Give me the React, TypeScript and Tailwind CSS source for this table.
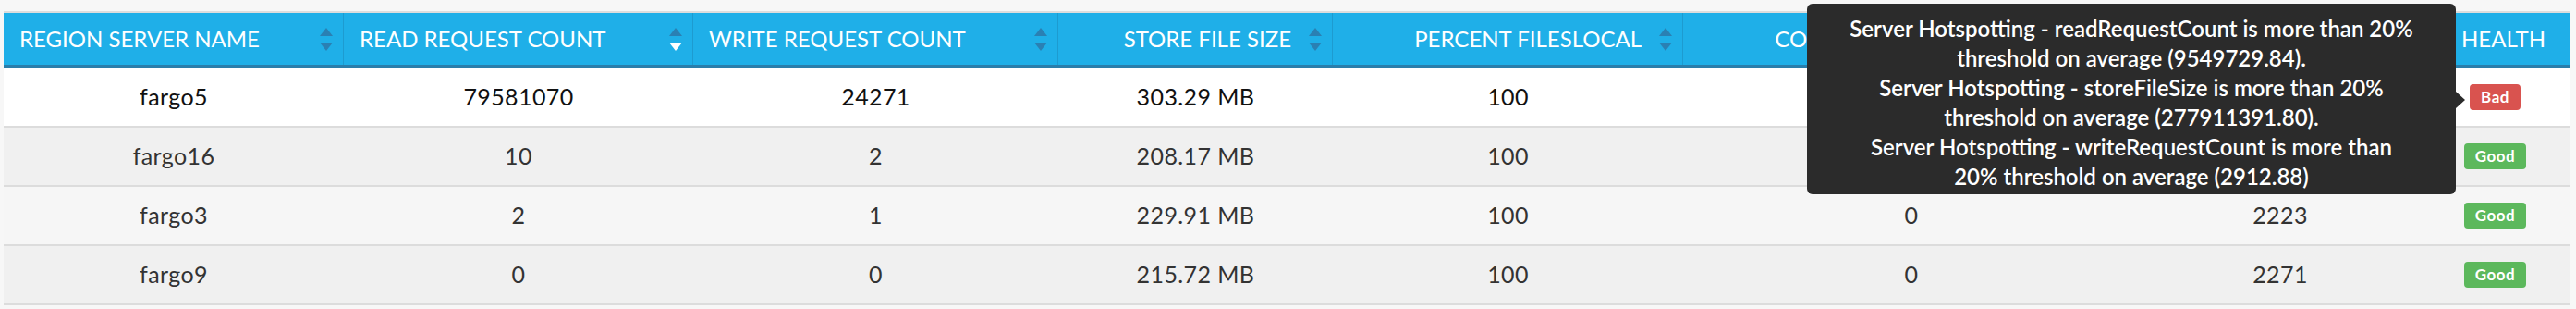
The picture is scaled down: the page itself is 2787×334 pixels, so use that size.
import React from "react"

type Col = { label: string; width: number; align: "left" | "right"; sort: "none" | "idle" | "desc" }

const columns: Col[] = [
  { label: "REGION SERVER NAME", width: 368, align: "left", sort: "idle" },
  { label: "READ REQUEST COUNT", width: 378, align: "left", sort: "desc" },
  { label: "WRITE REQUEST COUNT", width: 395, align: "left", sort: "idle" },
  { label: "STORE FILE SIZE", width: 297, align: "right", sort: "idle" },
  { label: "PERCENT FILESLOCAL", width: 379, align: "right", sort: "idle" },
  { label: "COMPACTION QUEUE LENGTH", width: 494, align: "right", sort: "idle" },
  { label: "REGION COUNT", width: 304, align: "right", sort: "idle" },
  { label: "HEALTH", width: 161, align: "right", sort: "none" },
]

const rows = [
  { name: "fargo5", read: "79581070", write: "24271", size: "303.29 MB", local: "100", queue: "0", regions: "2196", health: "Bad" },
  { name: "fargo16", read: "10", write: "2", size: "208.17 MB", local: "100", queue: "0", regions: "2198", health: "Good" },
  { name: "fargo3", read: "2", write: "1", size: "229.91 MB", local: "100", queue: "0", regions: "2223", health: "Good" },
  { name: "fargo9", read: "0", write: "0", size: "215.72 MB", local: "100", queue: "0", regions: "2271", health: "Good" },
]

const rowBg = ["bg-white", "bg-[#f0f0f0]", "bg-[#f6f6f6]", "bg-[#f0f0f0]"]

function SortIcon({ state }: { state: "idle" | "desc" }) {
  return (
    <svg width="14" height="25" viewBox="0 0 14 25" className="absolute right-[11px] top-[16px]">
      <polygon points="0,9 7,0 14,9" fill="#2a80b3" />
      <polygon points="0,16 14,16 7,25" fill={state === "desc" ? "#ffffff" : "#2a80b3"} />
    </svg>
  )
}

export default function App() {
  return (
    <div className="relative w-[2787px] h-[334px] bg-[#f7f7f7] pt-[12px] pl-[4px] overflow-hidden" style={{ fontFamily: "Lato, 'Open Sans', sans-serif" }}>
      <div className="w-[2776px] border-t-2 border-[#dddddd]">
        {/* Header */}
        <div className="flex h-[60px] bg-[#1fafe8] border-b-4 border-[#2a7eab]">
          {columns.map((c, i) => (
            <div
              key={c.label}
              style={{ width: c.width }}
              className={`relative flex items-center h-full text-white text-[24px] ${i < columns.length - 1 ? "border-r border-[#1d9bd0]" : ""} ${c.align === "left" ? "justify-start pl-[17px]" : c.sort === "none" ? "justify-end pr-[26px]" : "justify-end pr-[44px]"}`}
            >
              <span className="whitespace-nowrap">{c.label}</span>
              {c.sort !== "none" && <SortIcon state={c.sort} />}
            </div>
          ))}
        </div>

        {/* Rows */}
        {rows.map((r, i) => {
          const cells = [r.name, r.read, r.write, r.size, r.local, r.queue, r.regions]
          return (
            <div key={r.name} className={`flex h-[64px] border-b-2 border-[#dcdcdc] ${rowBg[i]}`}>
              {cells.map((v, j) => (
                <div
                  key={j}
                  style={{ width: columns[j].width }}
                  className={`flex items-center justify-center text-[25px] tracking-[0.4px] ${i === 0 ? "text-[#111111]" : "text-[#333333]"}`}
                >
                  {v}
                </div>
              ))}
              <div style={{ width: columns[7].width }} className="flex items-center justify-center">
                <span
                  className={`px-[12px] h-[28px] flex items-center rounded-[4px] text-white font-bold text-[17px] tracking-[0.5px] ${r.health === "Bad" ? "bg-[#d9534f]" : "bg-[#5cb85c]"}`}
                >
                  {r.health}
                </span>
              </div>
            </div>
          )
        })}
      </div>

      {/* Tooltip */}
      <div className="absolute left-[1955px] top-[4px] w-[702px] h-[206px] bg-[#2b2b2b] rounded-[6px] pt-[11px] text-white text-[24px] font-semibold leading-[32px] text-center">
        <p>Server Hotspotting - readRequestCount is more than 20%<br />threshold on average (9549729.84).</p>
        <p>Server Hotspotting - storeFileSize is more than 20%<br />threshold on average (277911391.80).</p>
        <p>Server Hotspotting - writeRequestCount is more than<br />20% threshold on average (2912.88)</p>
        <div className="absolute right-[-10px] top-[95px] w-0 h-0 border-y-[9px] border-y-transparent border-l-[10px] border-l-[#2b2b2b]" />
      </div>
    </div>
  )
}
